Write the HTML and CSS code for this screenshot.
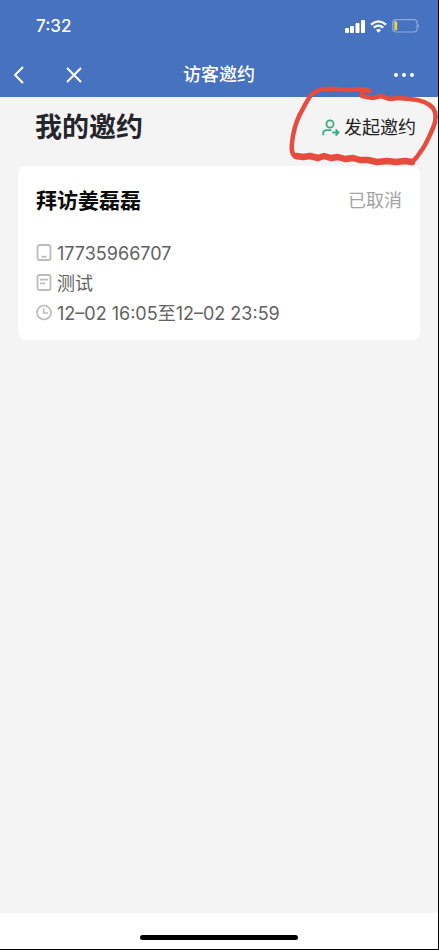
FILE: index.html
```html
<!DOCTYPE html>
<html lang="zh-CN">
<head>
<meta charset="utf-8">
<meta name="viewport" content="width=device-width, initial-scale=1">
<title>访客邀约</title>
<link rel="stylesheet" href="styles.css">
</head>
<body>
<div class="screen">
  <header class="topbar">
    <div class="status">
      <span class="clock">7:32</span>
      <div class="indicators">
        <svg width="20" height="13" viewBox="0 0 20 13" fill="#fff" aria-hidden="true">
          <rect x="0" y="8" width="4" height="5" rx="1"/><rect x="5" y="6" width="4" height="7" rx="1"/><rect x="10.500" y="3" width="4" height="10" rx="1"/><rect x="16" y="0" width="4" height="13" rx="1"/>
        </svg>
        <svg width="17" height="13" viewBox="0 0 17 13" fill="none" stroke="#fff" stroke-width="2.300" aria-hidden="true">
          <path d="M1 4.700Q8.500-2 16 4.700M3.800 7.700Q8.500 3.600 13.200 7.700"/>
          <path d="M6 10Q8.500 8.200 11 10L8.500 12.800Z" fill="#fff" stroke="none"/>
        </svg>
        <svg width="28" height="14" viewBox="0 0 28 14" aria-hidden="true">
          <rect x="0.700" y="0.700" width="24.500" height="12.300" rx="3.500" fill="none" stroke="#8fabdd" stroke-width="1.200"/>
          <rect x="2.200" y="2.300" width="3" height="9" rx="1" fill="#e8cf4c"/>
          <path d="M26.300 5Q28.300 7 26.300 9Z" fill="#8fabdd"/>
        </svg>
      </div>
    </div>
    <nav class="nav">
      <div class="nav-left">
        <button class="icon-button" type="button" aria-label="返回">
          <svg width="12" height="18" viewBox="0 0 12 18" fill="none" stroke="#fff" stroke-width="2"><path d="M10 1L2 9L10 17"/></svg>
        </button>
        <button class="icon-button" type="button" aria-label="关闭">
          <svg width="16" height="16" viewBox="0 0 16 16" fill="none" stroke="#fff" stroke-width="2"><path d="M1 1L15 15M15 1L1 15"/></svg>
        </button>
      </div>
      <h1 class="nav-title">访客邀约</h1>
      <button class="icon-button more" type="button" aria-label="更多">
        <svg width="20" height="4" viewBox="0 0 20 4" fill="#fff"><circle cx="2" cy="2" r="2"/><circle cx="10" cy="2" r="2"/><circle cx="18" cy="2" r="2"/></svg>
      </button>
    </nav>
  </header>

  <main class="content">
    <div class="heading">
      <h2 class="page-title">我的邀约</h2>
      <button class="invite" type="button">
        <svg width="18" height="18" viewBox="0 0 18 18" fill="none" stroke="#3fa981" stroke-width="1.800" aria-hidden="true">
          <circle cx="8" cy="5" r="3.600"/>
          <path d="M1.200 16V14.500Q1.200 11.200 4.800 11.200H9.300M10.300 13.500H16.300M13.600 10.500L16.600 13.500L13.600 16.500"/>
        </svg>
        <span>发起邀约</span>
        <svg class="marker" width="151" height="82" viewBox="288 85 151 82" fill="none" stroke="#e64b3d" stroke-linecap="round" stroke-linejoin="round" aria-hidden="true">
          <path stroke-width="4.500" d="M371 91L362 89L350 90L336 89C326 88 317 90 312 95C307 102 304 109 301 114C296 124 294 133 293 143C292 151 294 156 298 157"/>
          <path stroke-width="6.500" d="M297 156L304 157L311 156L319 158L325 156L332 158L339 157L346 159L354 158L361 160L369 160L378 162L388 161L397 162L406 161L413 162"/>
          <path stroke-width="4.500" d="M363 91L363 96L374 98L382 96L391 99L399 98L411 99C421 100 430 103 434 108C438 114 437 121 434 128C430 137 427 145 422 151C418 157 416 161 411 162"/>
        </svg>
      </button>
    </div>

    <article class="card">
      <div class="card-head">
        <h3 class="card-title">拜访姜磊磊</h3>
        <span class="state">已取消</span>
      </div>
      <ul class="details">
        <li>
          <svg width="16" height="17" viewBox="0 0 16 17" fill="none" stroke="#bcbcbc" stroke-width="1.800" aria-hidden="true"><rect x="1.500" y="1" width="13" height="15" rx="2"/><path d="M5.500 12.700H10.500"/></svg>
          <span>17735966707</span>
        </li>
        <li>
          <svg width="16" height="17" viewBox="0 0 16 17" fill="none" stroke="#bcbcbc" stroke-width="1.800" aria-hidden="true"><rect x="1.500" y="1" width="13" height="15" rx="2"/><path d="M4 5.700H12M4 9.300H9"/></svg>
          <span>测试</span>
        </li>
        <li>
          <svg width="16" height="17" viewBox="0 0 16 17" fill="none" stroke="#bcbcbc" stroke-width="1.700" aria-hidden="true"><circle cx="8" cy="8.500" r="7"/><path d="M7.700 4.500V9H12"/></svg>
          <span>12–02 16:05至12–02 23:59</span>
        </li>
      </ul>
    </article>
  </main>

  <footer class="home"><div class="home-bar"></div></footer>
</div>
</body>
</html>
```
FILE: styles.css
```css
* {
  box-sizing: border-box;
}

body {
  margin: 0;
  font-family: Inter, "Noto Sans CJK SC", sans-serif;
  background: #f4f4f4;
}

h1, h2, h3, ul {
  margin: 0;
  padding: 0;
}

button {
  padding: 0;
  border: 0;
  background: none;
  font: inherit;
  color: inherit;
}

.screen {
  display: flex;
  flex-direction: column;
  min-height: 100vh;
  overflow: hidden;
  border-right: 1px solid #000;
  border-bottom: 1px solid #000;
}

.topbar {
  background: #4672c0;
  color: #fff;
}

.status {
  display: flex;
  align-items: center;
  justify-content: space-between;
  height: 52px;
  padding: 0 18px 0 36px;
}

.clock {
  font-size: 17px;
  font-weight: 500;
}

.indicators {
  display: flex;
  align-items: center;
  gap: 5px;
}

.nav {
  display: grid;
  grid-template-columns: 1fr auto 1fr;
  align-items: center;
  height: 45px;
  padding: 0 13px;
}

.nav-left {
  display: flex;
  align-items: center;
  gap: 41px;
}

.icon-button {
  display: flex;
  align-items: center;
}

.more {
  justify-self: end;
  padding-right: 11px;
}

.nav-title {
  font-size: 18px;
  font-weight: 500;
  line-height: 24px;
}

.content {
  flex: 1;
  padding: 0 18px;
}

.heading {
  display: flex;
  align-items: center;
  justify-content: space-between;
  height: 69px;
  padding: 0 4px 8px 17px;
}

.page-title {
  font-size: 27px;
  font-weight: 700;
  line-height: 36px;
  color: #24262b;
}

.invite {
  position: relative;
  display: flex;
  align-items: center;
  gap: 4px;
  font-size: 18px;
  line-height: 24px;
  color: #222;
}

.marker {
  position: absolute;
  top: -31px;
  right: -22px;
  pointer-events: none;
}

.card {
  padding: 19px 18px 11px;
  border-radius: 8px;
  background: #fff;
}

.card-head {
  display: flex;
  align-items: center;
  justify-content: space-between;
  height: 28px;
}

.card-title {
  font-size: 21px;
  font-weight: 700;
  color: #0c0c0c;
}

.state {
  font-size: 18px;
  color: #a3a3a3;
}

.details {
  margin-top: 26px;
  list-style: none;
  font-size: 18px;
  line-height: 30px;
  color: #626262;
}

.details li {
  display: flex;
  align-items: center;
  gap: 5px;
  height: 30px;
}

.details svg {
  margin-bottom: 4px;
}

.home {
  display: flex;
  justify-content: center;
  height: 36px;
  padding-top: 22px;
  background: #fff;
}

.home-bar {
  width: 36%;
  height: 5px;
  border-radius: 3px;
  background: #000;
}
```
